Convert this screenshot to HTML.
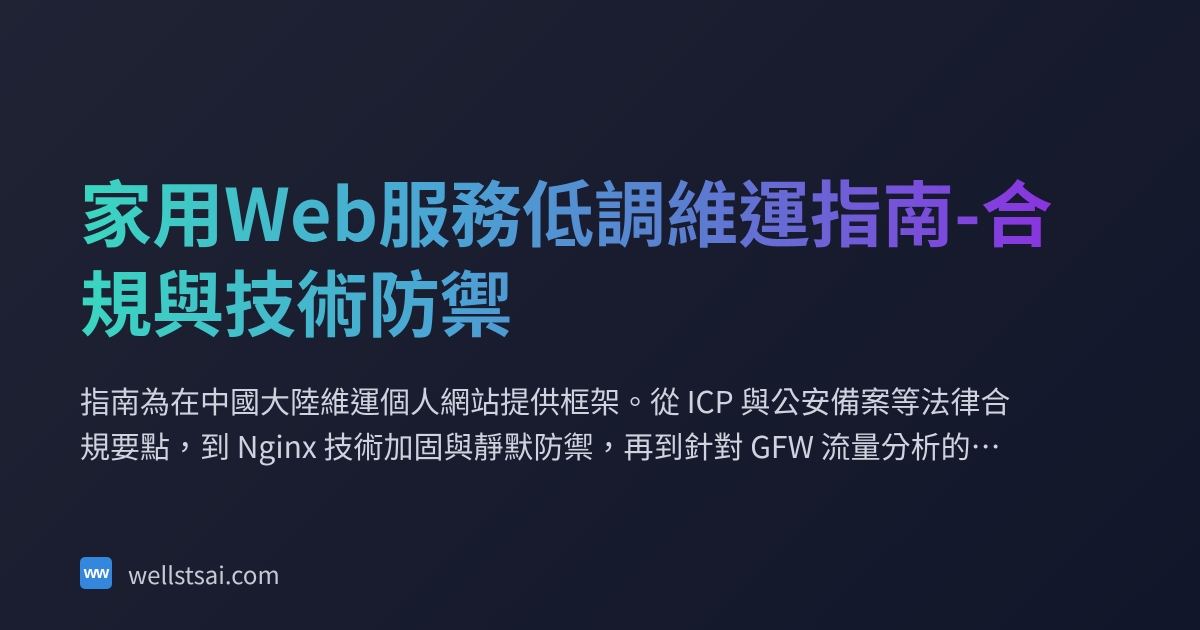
<!DOCTYPE html>
<html><head><meta charset="utf-8"><style>
html,body{margin:0;padding:0}
body{width:1200px;height:630px;overflow:hidden;background:linear-gradient(135deg,#1f2334 0%,#181c2e 50%,#12162a 100%);font-family:"Liberation Sans","Noto Sans CJK TC",sans-serif;position:relative}
h1{position:absolute;left:80px;top:165px;margin:0;width:1000px;white-space:nowrap;font-family:"Noto Sans CJK TC",sans-serif;font-size:72px;font-weight:700;line-height:90px;
background:linear-gradient(90deg,#3ad6c0 0%,#4aa6d4 35%,#5a7fd0 60%,#8a34e0 97%);-webkit-background-clip:text;background-clip:text;color:transparent}
p{position:absolute;left:80px;top:378px;margin:0;width:1060px;white-space:nowrap;font-family:"Noto Sans CJK TC",sans-serif;font-size:30px;line-height:45px;color:#cfd3dd}
.logo{position:absolute;left:80px;top:557px;width:32px;height:32px;border-radius:5px;background:#3388dd;color:#fff;font-size:17px;font-weight:700;text-align:center;line-height:32px;letter-spacing:-1px}
.site{position:absolute;left:128px;top:558px;font-family:"Noto Sans CJK TC",sans-serif;font-size:24px;line-height:32px;color:#c6cad4}
</style></head><body>
<h1>家用Web服務低調維運指南-合<br>規與技術防禦</h1>
<p>指南為在中國大陸維運個人網站提供框架。從 ICP 與公安備案等法律合<br>規要點，到 Nginx 技術加固與靜默防禦，再到針對 GFW 流量分析的…</p>
<div class="logo">ww</div>
<div class="site">wellstsai.com</div>
</body></html>
